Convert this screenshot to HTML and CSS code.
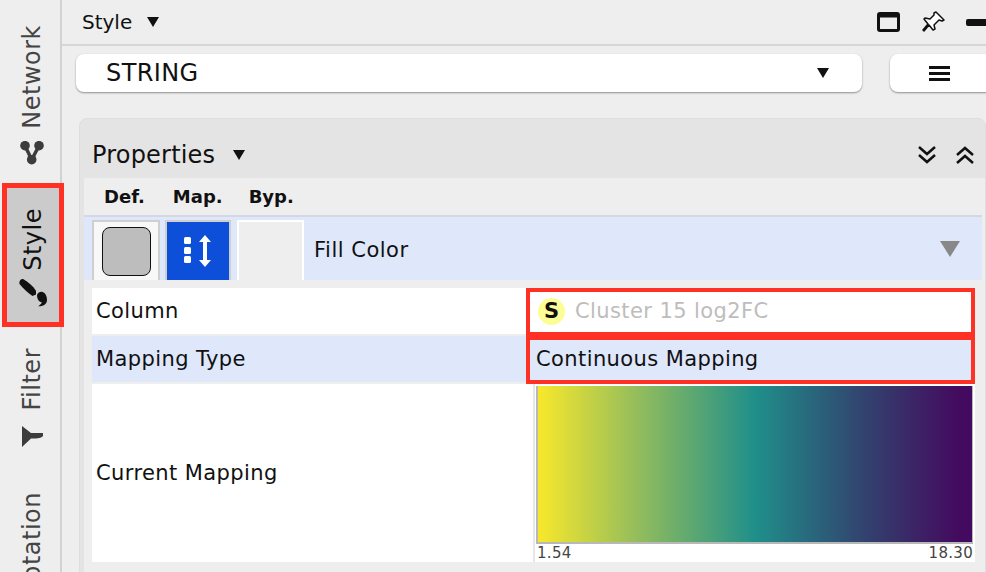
FILE: index.html
```html
<!DOCTYPE html>
<html lang="en">
<head>
    <meta charset="UTF-8">
    <meta name="viewport" content="width=device-width, initial-scale=1.0">
    <title>Style Panel</title>
    <link rel="stylesheet" href="styles.css">
</head>
<body>
    <div class="app">
        <nav class="side-tabs">
            <div class="side-tab tab-network">
                <svg class="tab-icon" width="24" height="24" viewBox="0 0 24 24"><path d="M5 4.7L11.7 18.7L19 4.7" fill="none" stroke="#3c3c3c" stroke-width="3.5"/><circle cx="5" cy="4.7" r="4.8" fill="#3c3c3c"/><circle cx="19" cy="4.7" r="4.8" fill="#3c3c3c"/><circle cx="11.7" cy="18.7" r="4.8" fill="#3c3c3c"/></svg>
                <span class="tab-label">Network</span>
            </div>
            <div class="side-tab tab-style">
                <svg class="tab-icon" width="30" height="30" viewBox="0 0 30 30"><path d="M1.5 6C0.8 3 3 0.5 5.5 1.2C10 4 15 8 18 12.7L18 16.5L14.5 18C10 15 5 10 1.5 6Z" fill="#111"/><path d="M19 17C20 14.5 22 13.5 24 13.8C27 14.5 29 18 29 22C29 25.5 26 28.5 20.3 28.3C22.5 26.5 23.7 25.5 23.7 24.3C21 24 19 21 19 17Z" fill="#111"/></svg>
                <span class="tab-label">Style</span>
            </div>
            <div class="side-tab tab-filter">
                <svg class="tab-icon" width="24" height="24" viewBox="0 0 24 24"><path d="M2 1L11 8H23V11C21 13 19 13.5 11 13.5L2 22Z" fill="#3c3c3c"/></svg>
                <span class="tab-label">Filter</span>
            </div>
            <div class="side-tab tab-annotation">
                <span class="tab-label">Annotation</span>
            </div>
        </nav>

        <main class="content">
            <header class="top-bar">
                <span class="top-title">Style</span>
                <span class="arrow-down top-arrow"></span>
                <div class="top-icons">
                    <svg width="24" height="20" viewBox="0 0 24 20"><rect x="1.5" y="1.5" width="20" height="17" rx="1.5" fill="none" stroke="#111" stroke-width="3"/><rect x="1.5" y="1.5" width="20" height="4" fill="#111"/></svg>
                    <svg width="24" height="24" viewBox="0 0 24 24"><path d="M14 2L22 10L20 11L17 10L12 15L13 19L11 20L7 15L2 21L1 20L6 14L2 9L3 8L8 9L12 5L12 3Z" fill="#fff" stroke="#111" stroke-width="1.5" stroke-linejoin="round"/></svg>
                    <span class="minimize"></span>
                </div>
            </header>

            <div class="style-row">
                <div class="combo">
                    <span class="combo-text">STRING</span>
                    <span class="arrow-down"></span>
                </div>
                <div class="menu-btn">
                    <span></span><span></span><span></span>
                </div>
            </div>

            <section class="props">
                <div class="props-head">
                    <span class="props-title">Properties</span>
                    <span class="arrow-down"></span>
                    <div class="props-icons">
                        <svg width="20" height="20" viewBox="0 0 20 20"><path d="M2 2L10 9L18 2M2 10L10 17L18 10" fill="none" stroke="#111" stroke-width="2.5"/></svg>
                        <svg width="20" height="20" viewBox="0 0 20 20"><path d="M2 10L10 3L18 10M2 18L10 11L18 18" fill="none" stroke="#111" stroke-width="2.5"/></svg>
                    </div>
                </div>

                <div class="props-body">
                    <div class="col-heads">
                        <span class="col-def">Def.</span>
                        <span class="col-map">Map.</span>
                        <span class="col-byp">Byp.</span>
                    </div>
                    <div class="fill-row">
                        <div class="btn-def"><span class="swatch"></span></div>
                        <div class="btn-map">
                            <svg width="32" height="34" viewBox="0 0 32 34"><rect x="2" y="3" width="7" height="7" rx="1.5" fill="#fff"/><rect x="2" y="13" width="7" height="7" rx="1.5" fill="#fff"/><rect x="2" y="22" width="7" height="7" rx="1.5" fill="#fff"/><path d="M23 1L29 8H25V26H29L23 33L17 26H21V8H17Z" fill="#fff"/></svg>
                        </div>
                        <div class="btn-byp"></div>
                        <span class="fill-name">Fill Color</span>
                        <span class="fill-arrow"></span>
                    </div>

                    <div class="map-table">
                        <div class="map-name">Column</div>
                        <div class="map-value marked">
                            <span class="badge">S</span>
                            <span class="col-name">Cluster 15 log2FC</span>
                        </div>
                        <div class="map-name alt">Mapping Type</div>
                        <div class="map-value marked alt">Continuous Mapping</div>
                        <div class="map-name">Current Mapping</div>
                        <div class="map-value current">
                            <div class="gradient"></div>
                            <div class="range"><span>1.54</span><span>18.30</span></div>
                        </div>
                    </div>
                </div>
            </section>
        </main>
    </div>
</body>
</html>
```

FILE: styles.css
```css
html, body {
    margin: 0;
    height: 100%;
    overflow: hidden;
}
body {
    font-family: "DejaVu Sans", Verdana, sans-serif;
    background-color: #eeeeee;
    color: #111;
}
.app {
    display: flex;
    width: 986px;
    height: 572px;
    overflow: hidden;
}

/* left tabs */
.side-tabs {
    width: 62px;
    flex-shrink: 0;
    border-right: 2px solid #d2d2d2;
    display: flex;
    flex-direction: column;
    align-items: center;
    padding: 25px 0 0 4px;
    box-sizing: border-box;
    height: 572px;
}
.side-tab {
    display: flex;
    flex-direction: column-reverse;
    align-items: center;
    flex-shrink: 0;
    gap: 12px;
    color: #444;
}
.tab-label {
    writing-mode: vertical-rl;
    transform: rotate(180deg);
    font-size: 24px;
    letter-spacing: 0.5px;
    line-height: 26px;
}
.tab-icon {
    display: block;
}
.tab-style {
    width: 62px;
    height: 144px;
    box-sizing: border-box;
    margin: 18px 0 0 0;
    align-self: flex-start;
    margin-left: -2px;
    border: 5px solid #ff3024;
    background-color: #cbcbcb;
    color: #111;
    justify-content: flex-start;
    padding-bottom: 14px;
    gap: 7px;
}
.tab-filter {
    margin-top: 21px;
    gap: 15px;
}
.tab-annotation {
    margin-top: 43px;
}

/* top */
.content {
    flex: 1;
    min-width: 0;
}
.top-bar {
    height: 44px;
    border-bottom: 2px solid #d6d6d6;
    box-sizing: content-box;
    display: flex;
    align-items: center;
    padding-left: 20px;
    font-size: 20px;
}
.top-arrow {
    margin-left: 15px;
}
.top-icons {
    margin-left: auto;
    display: flex;
    align-items: center;
    gap: 21px;
    margin-right: -14px;
}
.minimize {
    width: 34px;
    height: 7px;
    margin-left: -1px;
    border-radius: 2px;
    background-color: #111;
}
.arrow-down {
    width: 0;
    height: 0;
    border-left: 6.5px solid transparent;
    border-right: 6.5px solid transparent;
    border-top: 10px solid #111;
}

.style-row {
    display: flex;
    gap: 28px;
    margin: 8px 0 0 14px;
}
.combo, .menu-btn {
    height: 38px;
    flex-shrink: 0;
    background-color: #fff;
    border-radius: 8px;
    box-shadow: 0 1px 2px rgba(0, 0, 0, 0.4);
    box-sizing: border-box;
    display: flex;
    align-items: center;
}
.combo {
    width: 786px;
    padding: 0 33px 0 30px;
    justify-content: space-between;
    font-size: 24px;
    letter-spacing: 0.4px;
}
.menu-btn {
    width: 110px;
    flex-direction: column;
    justify-content: center;
    align-items: flex-start;
    gap: 3px;
    padding-left: 39px;
}
.menu-btn span {
    width: 21px;
    height: 3px;
    background-color: #111;
}

/* properties panel */
.props {
    margin: 26px 0 0 17px;
    width: 907px;
    background-color: #e4e4e4;
    border-top-left-radius: 8px;
    border-top-right-radius: 8px;
    border: 1px solid #dedede;
    box-sizing: border-box;
    height: 500px;
}
.props-head {
    height: 59px;
    display: flex;
    align-items: center;
    padding: 12px 0 0 12px;
    box-sizing: border-box;
    font-size: 24px;
    letter-spacing: 0.2px;
    gap: 18px;
}
.props-icons {
    margin-left: auto;
    margin-right: 10px;
    display: flex;
    gap: 18px;
}
.props-body {
    background-color: #eeeeee;
    margin-left: 4px;
    padding-bottom: 20px;
}
.col-heads {
    height: 37px;
    display: flex;
    align-items: center;
    font-size: 18px;
    font-weight: bold;
}
.col-def { margin-left: 20px; }
.col-map { margin-left: 28px; }
.col-byp { margin-left: 26px; }
.fill-row {
    height: 65px;
    width: 898px;
    box-sizing: border-box;
    background-color: #dfe7fb;
    border-top: 2px solid #d4d8e2;
    display: flex;
    align-items: flex-start;
    padding: 3px 0 0 8px;
}
.btn-def, .btn-map, .btn-byp {
    height: 60px;
    box-sizing: border-box;
    flex-shrink: 0;
}
.btn-def {
    width: 68px;
    margin-right: 5px;
    background-color: #f8f8f8;
    border: 2px solid #cfcfcf;
    border-bottom: 0;
    display: flex;
    justify-content: center;
    padding-top: 5px;
}
.swatch {
    width: 49px;
    height: 49px;
    box-sizing: border-box;
    background-color: #bdbdbd;
    border: 1px solid #111;
    border-radius: 8px;
}
.btn-map {
    width: 66px;
    margin-right: 6px;
    background-color: #0d4fd8;
    border: 2px solid #cfcfcf;
    border-bottom: 0;
    display: flex;
    align-items: center;
    justify-content: center;
}
.btn-byp {
    width: 67px;
    background-color: #eeeeee;
    border: 2px solid #fff;
    border-bottom: 0;
}
.fill-name {
    font-size: 21px;
    letter-spacing: 0.5px;
    margin: 18px 0 0 10px;
}
.fill-arrow {
    width: 0;
    height: 0;
    margin: 21px 0 0 auto;
    margin-right: 22px;
    border-left: 10px solid transparent;
    border-right: 10px solid transparent;
    border-top: 16px solid #888;
}

/* mapping table */
.map-table {
    display: grid;
    grid-template-columns: 434px 449px;
    grid-template-rows: 46px 46px 178px;
    row-gap: 2px;
    margin: 8px 0 0 8px;
    font-size: 21px;
    letter-spacing: 0.4px;
    width: 883px;
}
.map-name, .map-value {
    display: flex;
    align-items: center;
    box-sizing: border-box;
    background-color: #fff;
}
.map-name {
    padding-left: 4px;
}
.map-name.alt, .map-value.alt {
    background-color: #dfe7fb;
}
.map-value.marked {
    border: 4px solid #ff3024;
    padding: 0 0 2px 6px;
    margin-bottom: -2px;
}
.badge {
    width: 27px;
    height: 27px;
    flex-shrink: 0;
    border-radius: 50%;
    background-color: #fdfd96;
    font-weight: bold;
    letter-spacing: 0;
    display: flex;
    align-items: center;
    justify-content: center;
    margin: 0 10px 0 2px;
}
.col-name {
    color: #bdbdbd;
}
.map-value.current {
    flex-direction: column;
    align-items: stretch;
    padding: 2px 2px 0 10px;
    background: linear-gradient(to right, #fff 7px, #e6e6e6 7px, #e6e6e6 9px, #fff 9px);
}
.gradient {
    height: 158px;
    flex-shrink: 0;
    box-sizing: border-box;
    border-bottom: 2px solid #b8b8b8;
    border-left: 2px solid #b8b8b8;
    border-right: 1px solid #b8b8b8;
    background: linear-gradient(to right, #f8e82b, #a0c256 20%, #1f8f8a 50%, #32436f 75%, #440a5f 97%);
}
.range {
    display: flex;
    justify-content: space-between;
    padding-left: 1px;
    font-size: 15px;
    letter-spacing: 0.3px;
    color: #444;
    line-height: 18px;
}
```
